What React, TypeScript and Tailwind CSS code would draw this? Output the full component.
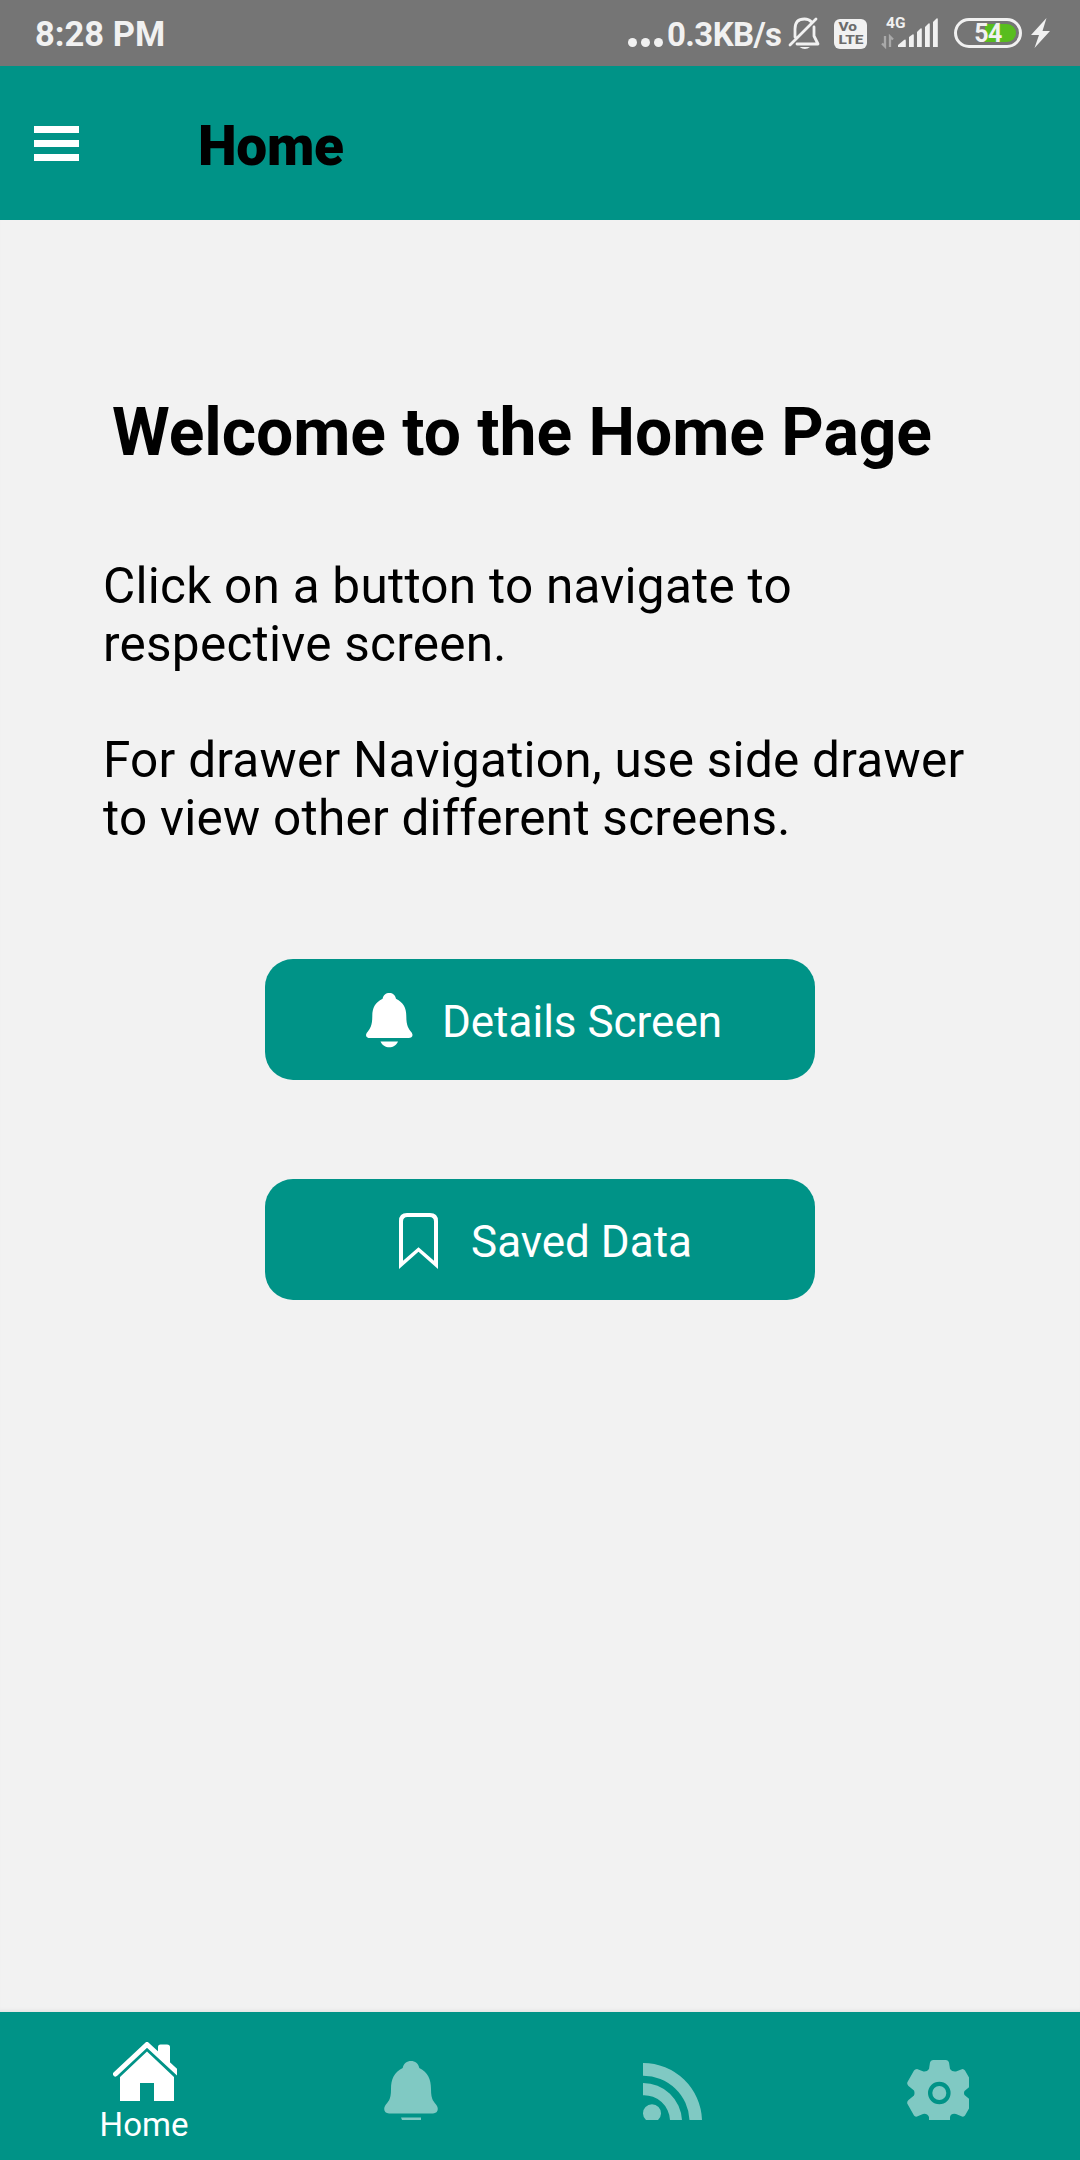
import React from "react";

function Signal() {
  return (
    <svg width="58" height="36" viewBox="0 -4 58 36" className="mb-[4px] ml-[14px] shrink-0">
      <text x="5" y="11" fontSize="15.500" fontWeight="700" fill="#f1f1f1" fontFamily="Roboto, sans-serif">4G</text>
      <path d="M1 26.500L4 29.500V19M9 30V19.500L12 22.500" fill="none" stroke="#a9a9a9" strokeWidth="2.300" />
      <g fill="#f1f1f1">
        <path d="M17 30v-2l6-5q1.800-1.200 1.800 1v6z" />
        <path d="M28 30v-10l3.500-2.500q1.300-.8 1.300 1v11.500z" />
        <path d="M36 30v-15l3.500-3.500q1.300-.8 1.300 1v17.500z" />
        <path d="M44 30v-20l3.500-3.500q1.300-.8 1.300 1v22.500z" />
        <path d="M52 30v-25l3.500-3.500q1.300-.8 1.300 1v27.500z" />
      </g>
    </svg>
  );
}

function StatusBar() {
  return (
    <header className="flex h-[66px] shrink-0 items-center bg-[#757575] pl-[35px] text-[#f1f1f1]">
      <span className="pt-[2px] text-[34.500px] font-bold leading-[44px]">8:28 PM</span>
      <div className="ml-auto flex h-full items-center pr-[29px]">
        <div className="mt-[18px] flex gap-[4px]">
          <i className="size-[9px] rounded-full bg-[#f1f1f1]" />
          <i className="size-[9px] rounded-full bg-[#f1f1f1]" />
          <i className="size-[9px] rounded-full bg-[#f1f1f1]" />
        </div>
        <span className="ml-[4px] mt-[3px] w-[114px] whitespace-nowrap text-[33px] font-bold leading-[44px] tracking-[-0.600px]">0.3KB/s</span>
        <svg width="32" height="33" viewBox="0 0 32 33" className="ml-[7px] shrink-0" fill="none" stroke="#f1f1f1" strokeWidth="2.800" strokeLinecap="round" strokeLinejoin="round">
          <path d="M7 20V12Q7 2 16.500 2Q21 2 23.500 5M26 10V19L30 27H9M2 28L28 2" />
          <path d="M11.500 30H22Q17 34 11.500 30z" fill="#f1f1f1" stroke="none" />
        </svg>
        <svg width="33" height="30" viewBox="0 0 33 30" className="ml-[14px] mt-px shrink-0">
          <rect width="33" height="30" rx="6" fill="#f1f1f1" />
          <g fill="#6c6c6c" fontFamily="Roboto, sans-serif" fontWeight="800" fontSize="12">
            <text x="4.500" y="12.200" textLength="18.500" lengthAdjust="spacingAndGlyphs">Vo</text>
            <text x="4.500" y="25.200" textLength="25" lengthAdjust="spacingAndGlyphs">LTE</text>
          </g>
        </svg>
        <Signal />
        <div className="relative ml-[15px] flex h-[30px] w-[68px] items-center rounded-full border-[3px] border-[#f1f1f1] p-[3px]">
          <div className="ml-auto h-full w-[31px] rounded-r-full bg-[#58bd1e]" />
          <span className="absolute inset-0 flex items-center justify-center pt-px text-[25px] font-bold leading-none tracking-[-0.500px]">54</span>
        </div>
        <svg width="20" height="30" viewBox="0 0 20 30" className="ml-[9px] shrink-0" fill="#f1f1f1">
          <path d="M15.500 0L0 17H8L3.500 30L19 13H11.500z" />
        </svg>
      </div>
    </header>
  );
}

function AppBar() {
  return (
    <div className="flex h-[154px] shrink-0 items-center bg-[#009387] pl-[34px]">
      <button aria-label="Open menu" className="flex w-[45px] flex-col gap-[7px]">
        <i className="h-[7px] bg-white" />
        <i className="h-[7px] bg-white" />
        <i className="h-[7px] bg-white" />
      </button>
      <h1 className="ml-[119px] pt-[7px] text-[55px] font-black leading-[65px] tracking-[-0.300px] text-black">Home</h1>
    </div>
  );
}

function BellIcon() {
  return (
    <svg width="47" height="55" viewBox="0 0 47 55" fill="white" className="mb-px">
      <path d="M23.300 0C20 0 17.300 2 16.600 5.800C9 9.500 6.300 15 6.300 23C6.300 33 4 35.500 1.500 39C-1.500 42.500.5 45 4 45H42.600C46 45 48 42.500 45.200 39C42.600 35.500 40.300 33 40.300 23C40.300 15 37.500 9.500 30 5.800C29.300 2 26.600 0 23.300 0z" />
      <path d="M14.500 48.500H32C30.500 52.300 27 54.300 23.300 54.300S16 52.300 14.500 48.500z" />
    </svg>
  );
}

function BookmarkIcon() {
  return (
    <svg width="43" height="57" viewBox="0 0 43 57" fill="white" fillRule="evenodd" className="ml-[3px]">
      <path d="M0 56V8Q0 0 8 0H31Q39 0 39 8V56L19.500 38.700zM4 47.700L19.500 34.300L35 47.700V8.500Q35 4 30.500 4H8.500Q4 4 4 8.500z" />
    </svg>
  );
}

function ActionButton({ icon, label }: { icon: React.ReactNode; label: string }) {
  return (
    <button className="flex h-[121px] w-[550px] items-center justify-center rounded-[28px] bg-[#009387] pl-[8px] pt-[3px] text-[44px] text-white">
      {icon}
      <span className="ml-[29px] pt-[2px] leading-[52px]">{label}</span>
    </button>
  );
}

function TabBar() {
  return (
    <nav className="grid h-[148px] shrink-0 grid-cols-[288px_246px_276px_256px] bg-[#009387] text-white">
      <div className="flex flex-col items-center pt-[30px]">
        <svg width="64" height="59" viewBox="0 0 64 59" fill="white" className="ml-[2px]">
          <path d="M7 35L34 9.500L61 35V59H41V41H27V59H7z" />
          <path d="M2.500 32L34 2.500L66 32" fill="none" stroke="white" strokeWidth="5" strokeLinecap="round" strokeLinejoin="round" />
          <path d="M45 12V5Q45 2.500 47.500 2.500H54Q57 2.500 57 5V23z" />
        </svg>
        <span className="mt-[4px] text-[33px] leading-[39px]">Home</span>
      </div>
      <div className="flex justify-center pt-[49px] opacity-50">
        <svg width="54" height="59" viewBox="0 0 54 59" fill="white">
          <path d="M27 0C23 0 19.500 2.500 18.700 7C10 11.500 7 18 7 28C7 40 4 40 1 45C-1 49 1 52.500 5 52.500H49C53 52.500 55 49 53 45C50 40 47 40 47 28C47 18 44 11.500 35.300 7C34.500 2.500 31 0 27 0z" />
          <path d="M17 56.500H37V59H18z" />
        </svg>
      </div>
      <div className="flex justify-center pt-[51px] opacity-50">
        <svg width="59" height="57" viewBox="0 0 59 57" fill="white">
          <path d="M0 0A59 59 0 0 1 59 57H46.500A46.300 46.300 0 0 0 0 12.700z" />
          <path d="M0 20A39 39 0 0 1 39 57H27A26 26 0 0 0 0 32.300z" />
          <path d="M3 57A9 9 0 1 1 15 57z" />
        </svg>
      </div>
      <div className="flex justify-center pt-[48px] opacity-50">
        <svg width="62" height="60" viewBox="0 0 62 60" fill="white" fillRule="evenodd">
          <path d="M26 0H39Q41.500 0 42 2.500L43 9Q45 12 49 11.500L55.500 9Q57 9 58 10.500L64.500 22Q65.500 24.500 63 26.500L57.500 31Q56.500 33 57.500 35L63 39.500Q65.500 41.500 64.500 44L58 55.500Q57 57 55 56.500L49 54Q44 53 43 57V60H22V57Q20 53 16 54L10 56.500Q8 57 7 55.500L.5 44Q-.5 42 1.500 40L7 35.500Q8 33 7 30.500L1.500 26Q-.5 24 .5 22L7 10.500Q8 9 10 9L16.500 11.500Q20 12 22 9L23 2.500Q23.500 0 26 0zM32.300 21.700a11.300 11.300 0 1 0 0 22.600a11.300 11.300 0 1 0 0-22.600z" />
          <circle cx="32.300" cy="33" r="7" />
        </svg>
      </div>
    </nav>
  );
}

export default function App() {
  return (
    <div className="flex h-[2160px] w-[1080px] flex-col overflow-hidden bg-[#f2f2f2] font-[Roboto,sans-serif]">
      <StatusBar />
      <AppBar />
      <main className="flex flex-1 flex-col items-center shadow-[inset_0_-4px_4px_-3px_rgba(0,0,0,0.08)]">
        <h2 className="mt-[174px] self-start pl-[112px] text-[66px] font-bold leading-[78px] tracking-[-0.050px]">Welcome to the Home Page</h2>
        <div className="mt-[85px] self-start pl-[103px] text-[49.500px] leading-[58px] tracking-[0.250px] text-black">
          <p>Click on a button to navigate to<br />respective screen.</p>
          <p className="mt-[58px]">For drawer Navigation, use side drawer<br />to view other different screens.</p>
        </div>
        <div className="mt-[112px] flex flex-col gap-[99px]">
          <ActionButton icon={<BellIcon />} label="Details Screen" />
          <ActionButton icon={<BookmarkIcon />} label="Saved Data" />
        </div>
      </main>
      <TabBar />
    </div>
  );
}
